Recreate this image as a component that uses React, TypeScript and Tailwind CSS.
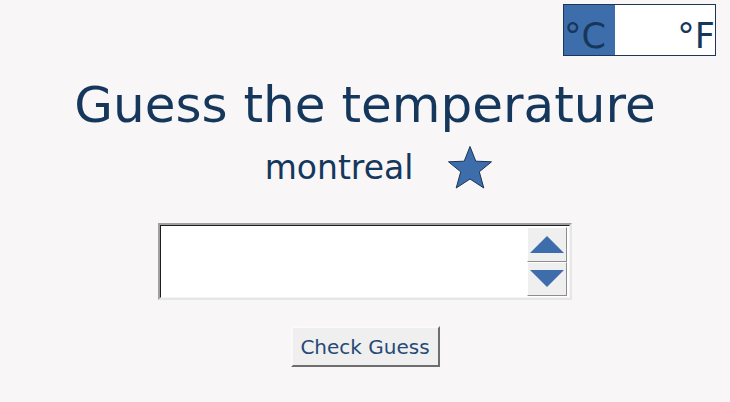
import React, { useState } from "react";

const font = { fontFamily: '"DejaVu Sans", Verdana, sans-serif' };

const Star = () => (
  <svg width="46" height="45" viewBox="0 0 46 45" aria-hidden="true">
    <polygon
      points="23,1.5 28.8,16.2 44.5,16.8 32.3,26.8 36.8,43 23,34 9.2,43 13.7,26.8 1.5,16.8 17.2,16.2"
      fill="#3e6dab"
      stroke="#1c3454"
      strokeWidth="1"
    />
  </svg>
);

const SpinButton = ({ dir }: { dir: "up" | "down" }) => (
  <div className="flex h-[35px] items-center justify-center border border-t-white border-l-white border-r-[#8c8c8c] border-b-[#8c8c8c] bg-[#efefef]">
    <svg width="34" height="17" viewBox="0 0 34 17" aria-hidden="true">
      {dir === "up" ? (
        <polygon points="17,0 34,17 0,17" fill="#3e6dab" />
      ) : (
        <polygon points="0,0 34,0 17,17" fill="#3e6dab" />
      )}
    </svg>
  </div>
);

const App = () => {
  const [unit, setUnit] = useState<"C" | "F">("C");
  const [guess, setGuess] = useState("");

  return (
    <div
      className="min-h-[402px] w-full bg-[#f8f6f7] text-[#16375c]"
      style={font}
    >
      <div className="flex justify-end pt-[4px] pr-[14px]">
        <div className="flex h-[52px] w-[153px] border border-[#1d3557] bg-white text-[35px] leading-[50px]">
          <button
            onClick={() => setUnit("C")}
            className={`w-[51px] pt-[6px] text-left ${
              unit === "C" ? "bg-[#3e6dab]" : "bg-white"
            }`}
          >
            °C
          </button>
          <button
            onClick={() => setUnit("F")}
            className={`flex-1 pt-[6px] text-right ${
              unit === "F" ? "bg-[#3e6dab]" : "bg-white"
            }`}
          >
            °F
          </button>
        </div>
      </div>

      <h1 className="mt-[20px] text-center text-[50px] leading-[58px] font-normal">
        Guess the temperature
      </h1>

      <div className="mt-[11px] flex items-center justify-center gap-[34px] pl-[28px]">
        <span className="text-[33px] leading-[38px]">montreal</span>
        <Star />
      </div>

      <div className="mt-[33px] flex justify-center">
        <div className="flex h-[77px] w-[414px] border-2 border-t-[#a0a0a0] border-l-[#a0a0a0] border-r-[#e6e6e6] border-b-[#e6e6e6]">
          <div className="flex min-w-0 flex-1 border border-t-[#1e1e1e] border-l-[#1e1e1e] border-r-[#f4f4f4] border-b-[#f4f4f4] bg-white py-[1px] pr-[2px]">
            <input
              type="text"
              value={guess}
              onChange={(e) => setGuess(e.target.value)}
              className="w-0 min-w-0 flex-1 bg-white px-2 text-[32px] outline-none"
            />
            <div className="flex w-[40px] shrink-0 flex-col">
              <SpinButton dir="up" />
              <SpinButton dir="down" />
            </div>
          </div>
        </div>
      </div>

      <div className="mt-[26px] flex justify-center">
        <button className="h-[41px] w-[149px] border-2 border-t-[#fafafa] border-l-[#fafafa] border-r-[#6e6e6e] border-b-[#6e6e6e] bg-[#efefef] text-[20px] text-[#264a75]">
          Check Guess
        </button>
      </div>
    </div>
  );
};

export default App;
